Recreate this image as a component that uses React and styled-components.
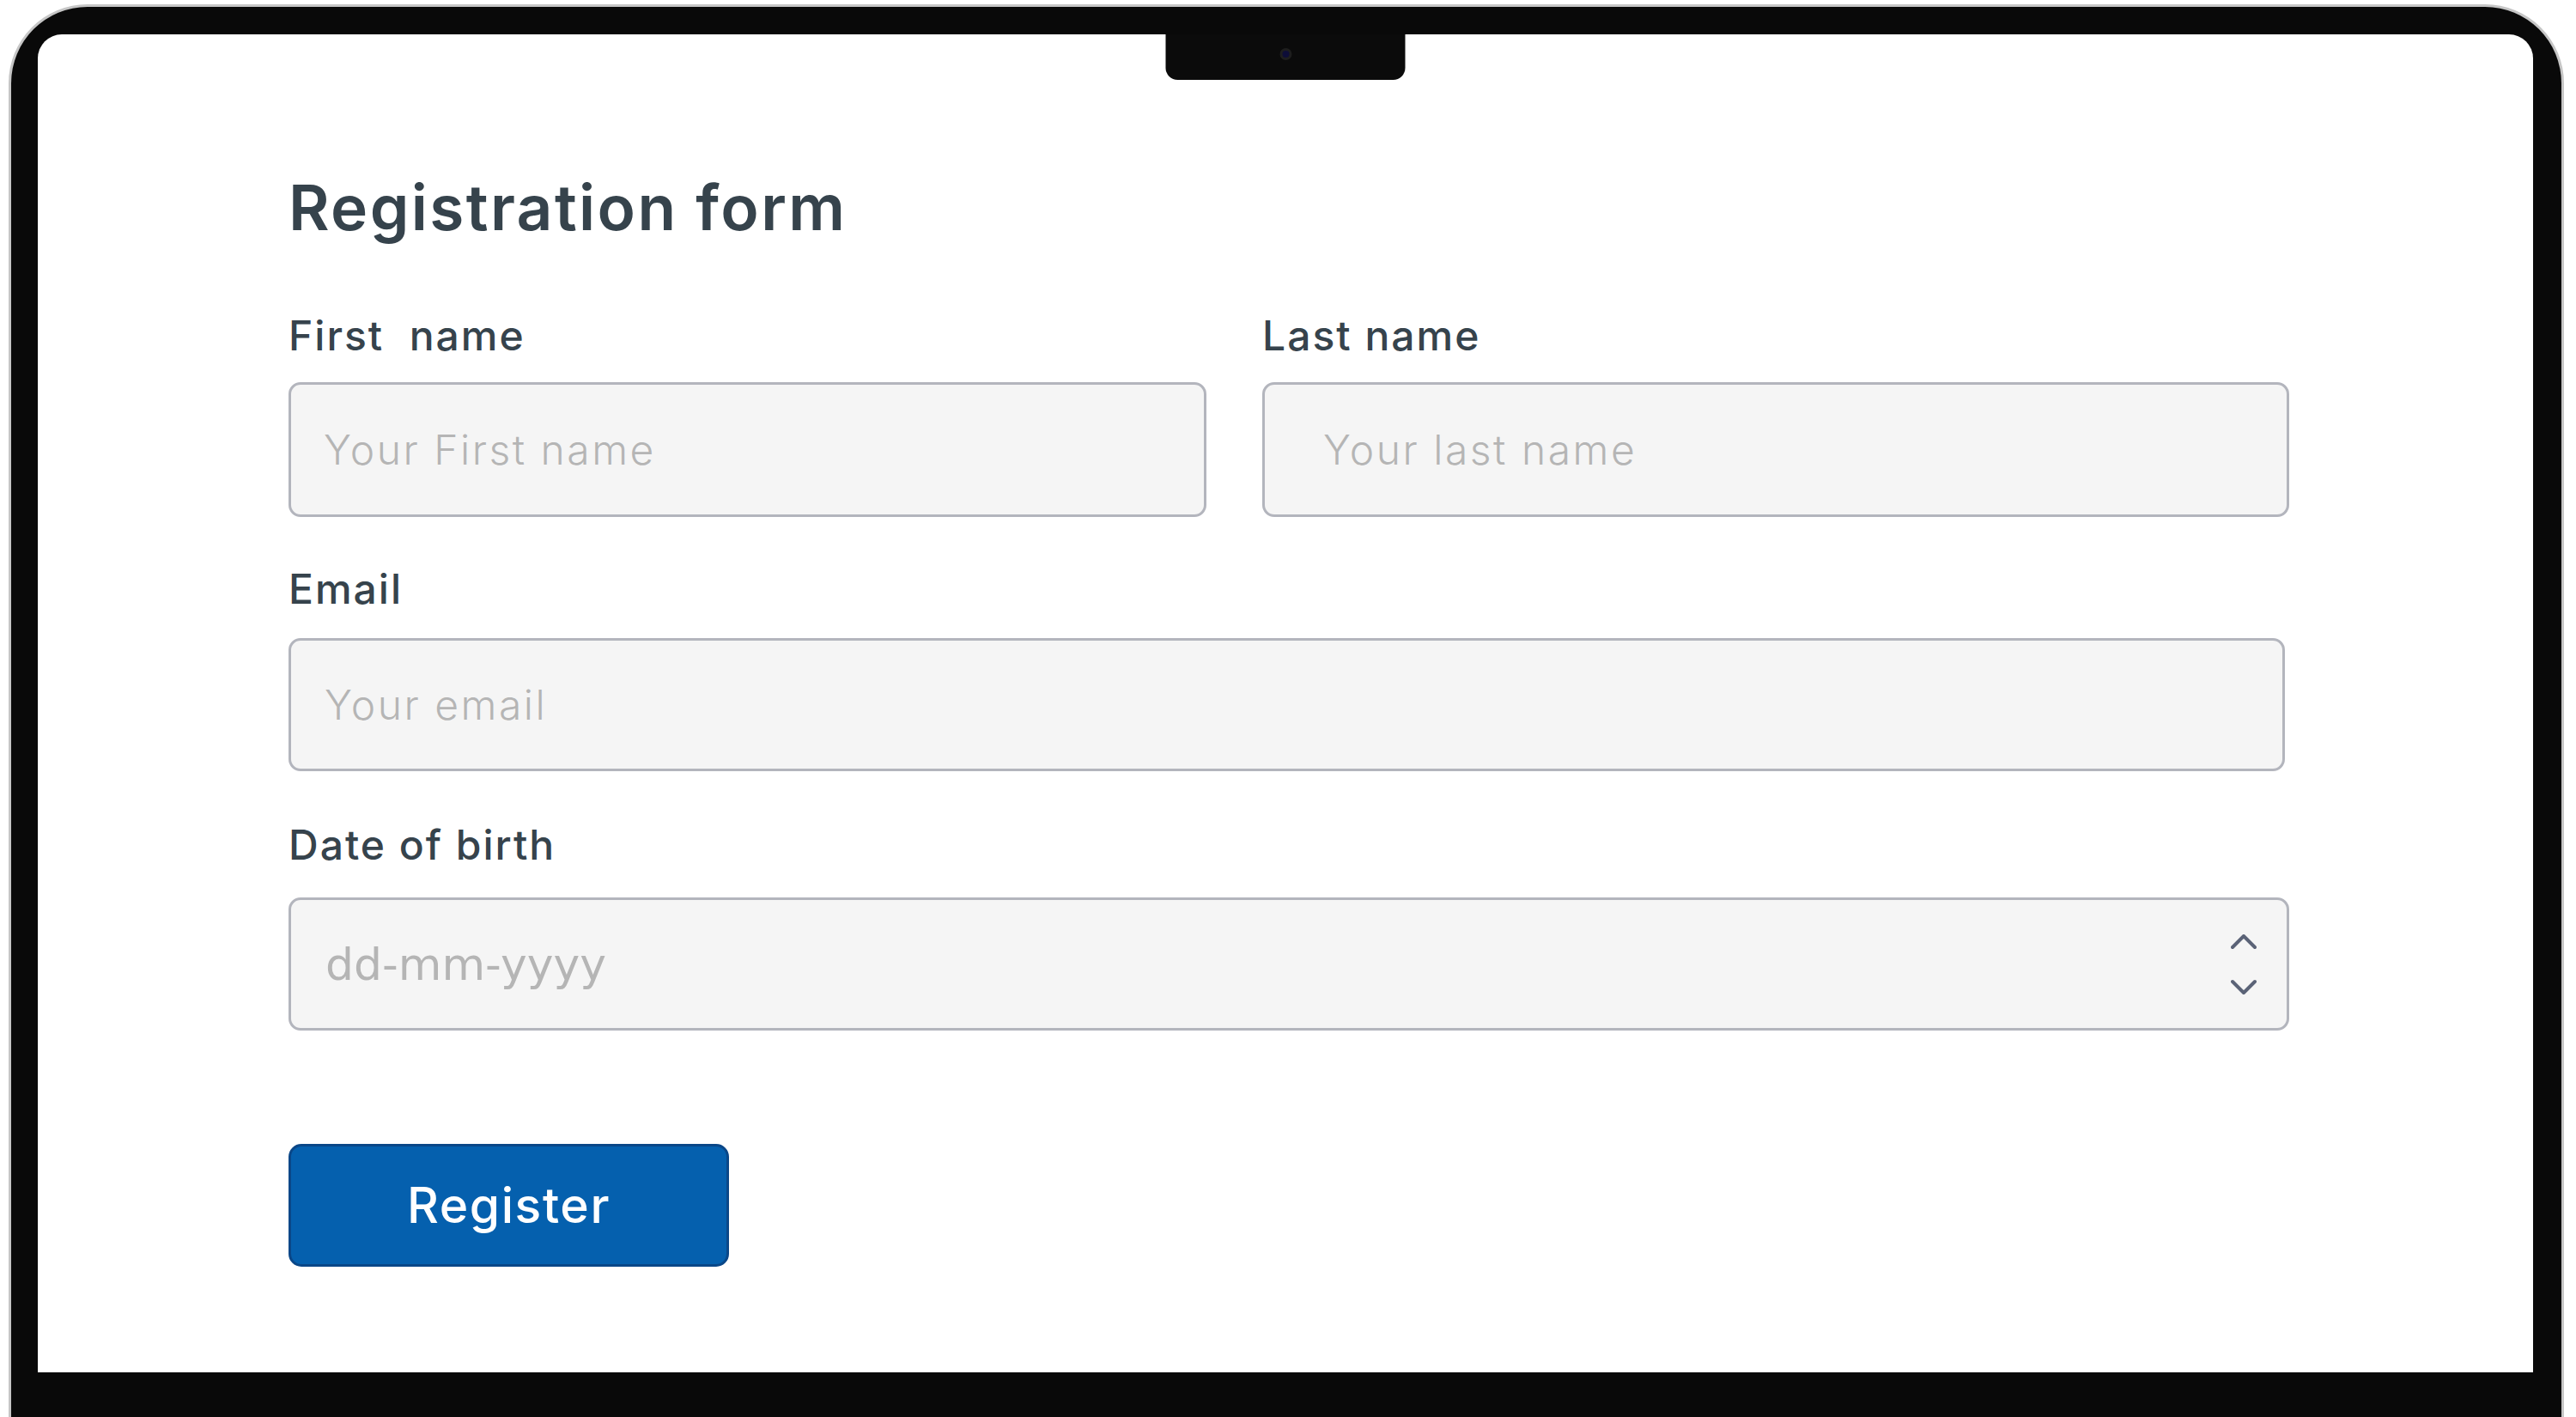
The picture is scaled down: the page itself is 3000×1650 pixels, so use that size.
import React from "react";
import styled, { createGlobalStyle } from "styled-components";

const GlobalStyle = createGlobalStyle`
  html, body {
    margin: 0;
    padding: 0;
    background: #ffffff;
    overflow: hidden;
  }
  * { box-sizing: border-box; }
`;

const Device = styled.div`
  width: 2976px;
  height: 1645px;
  margin: 5px 0 0 10px;
  background: #090909;
  border: 3px solid #c6c6c6;
  border-bottom: 0;
  border-radius: 92px 92px 0 0;
  padding: 32px 33px 0 31px;
`;

const Screen = styled.div`
  position: relative;
  height: 1558px;
  background: #ffffff;
  border-radius: 28px 28px 0 0;
  overflow: hidden;
`;

const Notch = styled.div`
  position: absolute;
  top: 0;
  left: 50%;
  transform: translateX(-50%);
  width: 279px;
  height: 53px;
  background: #0b0b0b;
  border-radius: 0 0 14px 14px;
  display: flex;
  justify-content: center;
  padding-top: 16px;
`;

const Camera = styled.div`
  width: 14px;
  height: 14px;
  border-radius: 50%;
  background: #0d0d38;
  border: 3px solid #1e1e1e;
`;

const Form = styled.form`
  padding: 165px 0 0 292px;
  font-family: Inter, "Noto Sans", sans-serif;
`;

const Title = styled.h1`
  margin: 0 0 89px;
  font-size: 73px;
  line-height: 1;
  font-weight: 600;
  color: #36434c;
  letter-spacing: 2.4px;
`;

const Row = styled.div`
  display: grid;
  grid-template-columns: 1069px 1196px;
  column-gap: 65px;
  margin-bottom: 60px;
`;

const Group = styled.div`
  display: flex;
  flex-direction: column;
  margin-bottom: ${(p) => p.$after}px;
`;

const Label = styled.label`
  font-size: 48px;
  line-height: 1;
  font-weight: 500;
  color: #36434c;
  letter-spacing: 2px;
  margin-bottom: ${(p) => p.$gap}px;
  white-space: pre;
`;

const Box = styled.div`
  width: ${(p) => (p.$width ? `${p.$width}px` : "100%")};
  height: ${(p) => p.$height}px;
  border: 3px solid #b3b5bd;
  border-radius: 14px;
  background: #f5f5f5;
  display: flex;
  align-items: center;
  padding-left: ${(p) => p.$inset - 3}px;
`;

const Input = styled.input`
  flex: 1;
  min-width: 0;
  border: none;
  outline: none;
  background: transparent;
  padding: 0;
  font-family: ${(p) => (p.$system ? '"DejaVu Sans", sans-serif' : 'Inter, "Noto Sans", sans-serif')};
  font-size: ${(p) => (p.$system ? "52px" : "48px")};
  font-weight: ${(p) => (p.$system ? 400 : 300)};
  letter-spacing: ${(p) => (p.$system ? "0px" : "2.5px")};
  color: #333;
  &::placeholder {
    color: #b5b5b5;
    opacity: 1;
  }
`;

const Spinner = styled.svg`
  flex: none;
  width: 30px;
  height: 70px;
  margin-right: 35px;
`;

const Button = styled.button`
  margin-top: 132px;
  width: 513px;
  height: 143px;
  background: #0560ae;
  border: 3px solid #0a4788;
  border-radius: 15px;
  color: #ffffff;
  font-family: Inter, "Noto Sans", sans-serif;
  font-size: 57px;
  font-weight: 500;
  letter-spacing: 1.6px;
  cursor: pointer;
  padding: 0;
`;

function Field({
  label,
  placeholder,
  inset,
  width,
  after = 0,
  gap = 36,
  height = 155,
  system,
  spinner,
}) {
  return (
    <Group $after={after}>
      <Label $gap={gap}>{label}</Label>
      <Box $inset={inset} $width={width} $height={height}>
        <Input type="text" placeholder={placeholder} $system={system} />
        {spinner && (
          <Spinner viewBox="0 0 30 70" fill="none">
            <polyline
              points="2,15 15,2 28,15"
              stroke="#5b6377"
              strokeWidth="4"
              strokeLinecap="round"
              strokeLinejoin="round"
            />
            <polyline
              points="2,55 15,68 28,55"
              stroke="#5b6377"
              strokeWidth="4"
              strokeLinecap="round"
              strokeLinejoin="round"
            />
          </Spinner>
        )}
      </Box>
    </Group>
  );
}

export default function App() {
  return (
    <>
      <GlobalStyle />
      <Device>
        <Screen>
          <Notch>
            <Camera />
          </Notch>
          <Form onSubmit={(e) => e.preventDefault()}>
            <Title>Registration form</Title>
            <Row>
              <Field label="First  name" placeholder="Your First name" inset={41} gap={30} height={157} />
              <Field label="Last name" placeholder="Your last name" inset={71} gap={30} height={157} />
            </Row>
            <Field label="Email" placeholder="Your email" inset={42} width={2325} gap={33} after={62} />
            <Field
              label="Date of birth"
              placeholder="dd-mm-yyyy"
              inset={43}
              width={2330}
              gap={37}
              system
              spinner
            />
            <Button type="submit">Register</Button>
          </Form>
        </Screen>
      </Device>
    </>
  );
}
